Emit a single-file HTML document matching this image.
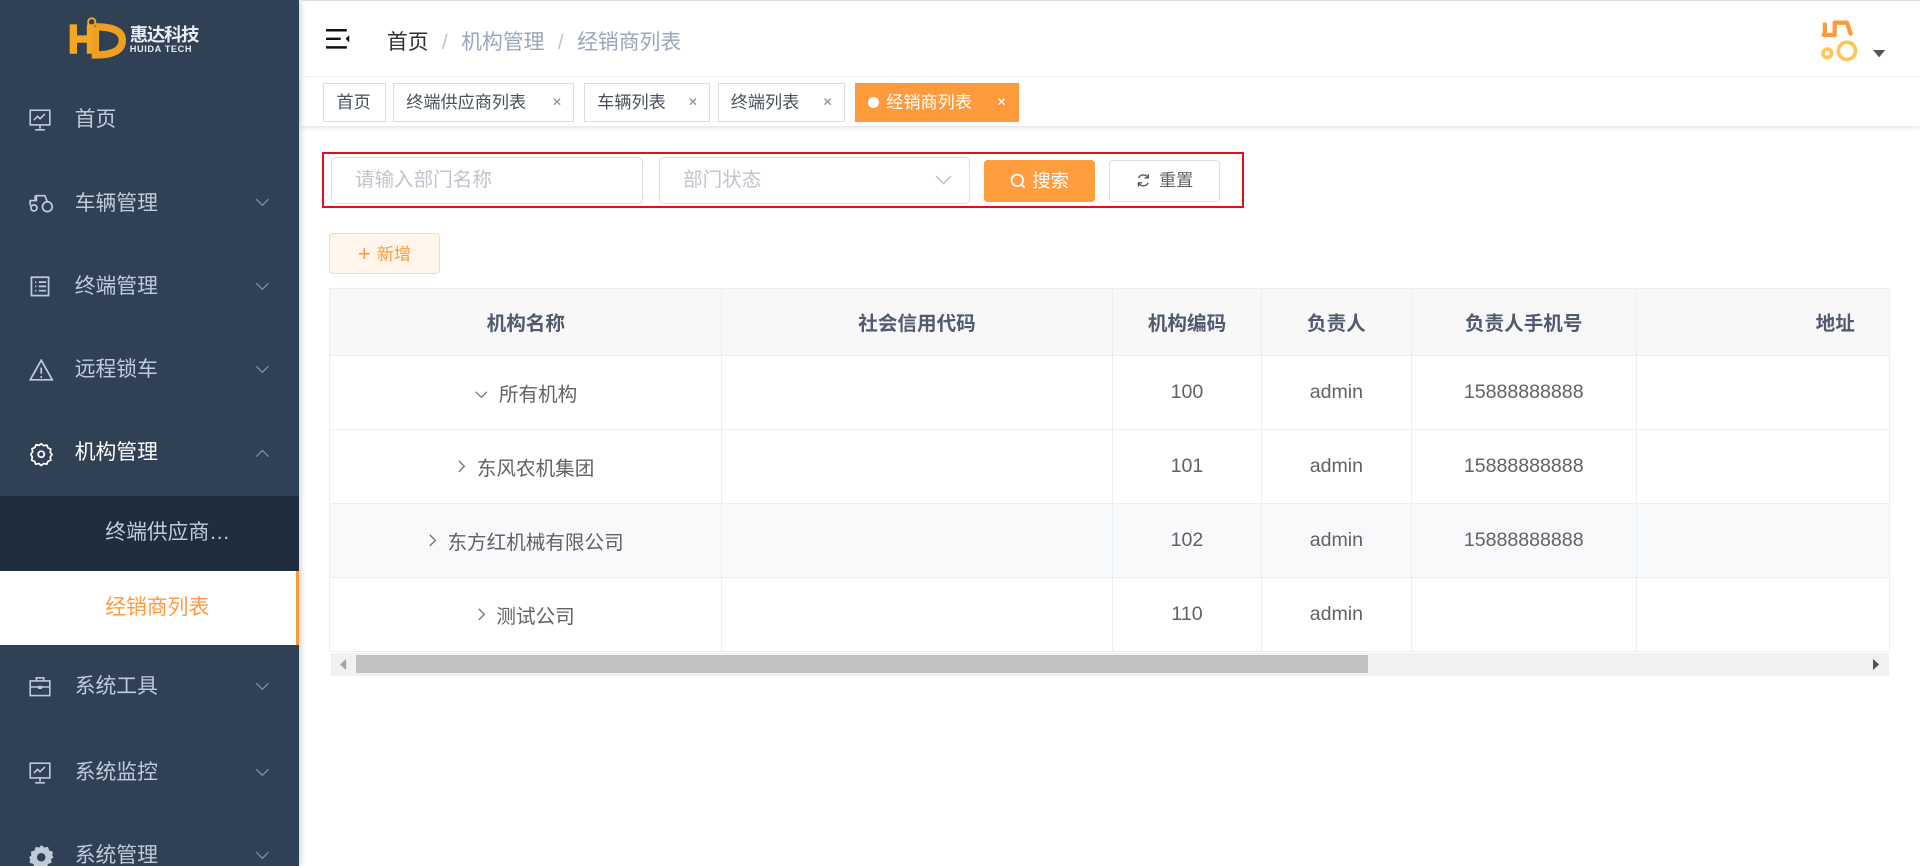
<!DOCTYPE html>
<html><head><meta charset="utf-8">
<style>
html{zoom:1.22449;overflow:hidden;height:707px}
*{box-sizing:border-box;margin:0;padding:0}
body{width:1568px;height:707px;overflow:hidden;position:relative;background:#fff;font-family:"Liberation Sans","Noto Sans CJK SC",sans-serif;}
.abs{position:absolute}
#side{left:0;top:0;width:244px;height:707px;background:#304156;box-shadow:2px 0 4px rgba(0,0,0,.15);overflow:hidden}
.mi{position:absolute;left:0;width:244px;height:68px;color:#bfcbd9;font-size:17px;line-height:68px;padding-left:61px}
.mi svg.ic{position:absolute;left:24px;top:25px}
.mi .ar{position:absolute;left:208px;top:30px}
.sub{position:absolute;left:0;width:244px;height:61px;line-height:61px;font-size:17px;padding-left:86px}
#hdr{left:246px;top:0;width:1322px;height:62px;border-top:1px solid #ddd}
#tags{left:246px;top:62px;width:1322px;height:41px;border-top:1px solid #eef0f3;box-shadow:0 2px 3px rgba(0,0,0,.1)}
.tag{position:absolute;top:5px;height:32px;border:1px solid #d8dce5;font-size:14px;line-height:30px;color:#495060;padding:0 10px;background:#fff;white-space:nowrap}
.tag i{font-style:normal;font-size:10px;color:#888;position:absolute;right:9px;top:0}
.inp{position:absolute;border:1px solid #dcdfe6;border-radius:4px;color:#c0c4cc;font-size:16px;line-height:37px;padding-left:19px;height:39px;top:128px}
table{border-collapse:collapse;position:absolute;left:269px;top:235px;width:1274px;table-layout:fixed}
td,th{border:1px solid #ebeef5;text-align:center;font-size:16px;color:#606266;font-weight:normal}
th{height:55px;background:#f8f8f9;color:#515a6e;font-weight:bold}
td{height:60.5px}
.ex{margin-right:8px;vertical-align:1px}
</style></head><body>
<div id="side" class="abs">
  <div class="abs" style="left:54px;top:14px;">
    <svg width="50" height="34" viewBox="0 0 50 34"><path d="M6 6 L6 30 M6 18 L20 18 M20 6 L20 30" stroke="#f5a623" stroke-width="6" fill="none"/><path d="M24 8 Q46 8 46 19 Q46 31 24 31 L24 8" stroke="#f0a020" stroke-width="6" fill="none"/><circle cx="21" cy="4" r="3" fill="none" stroke="#f5a623" stroke-width="1.5"/></svg>
  </div>
  <div class="abs" style="left:106px;top:17px;color:#e8edf3;font-size:15px;font-weight:bold;letter-spacing:-1px">惠达科技</div>
  <div class="abs" style="left:106px;top:36px;color:#e8edf3;font-size:7.5px;font-weight:bold;letter-spacing:.5px">HUIDA TECH</div>

  <div class="mi" style="top:64px"><svg class="ic" width="18" height="18" viewBox="0 0 18 18" fill="none" stroke="#bfcbd9" stroke-width="1.3"><rect x="1" y="1" width="16" height="12"/><path d="M9 13v3M5 17h8M4 9l3-3 2 2 4-4"/></svg>首页</div>
  <div class="mi" style="top:132px"><svg class="ic" width="20" height="18" viewBox="0 0 20 18" fill="none" stroke="#bfcbd9" stroke-width="1.4"><circle cx="4" cy="13" r="2.5"/><circle cx="15" cy="12" r="4"/><path d="M1 11V7h5V3h7l2 5M5 7V3"/></svg>车辆管理<svg class="ar" width="12" height="8" viewBox="0 0 12 8"><path d="M1 1l5 5 5-5" stroke="#8391a5" fill="none"/></svg></div>
  <div class="mi" style="top:200px"><svg class="ic" width="18" height="18" viewBox="0 0 18 18" fill="none" stroke="#bfcbd9" stroke-width="1.4"><rect x="2" y="1" width="14" height="15"/><path d="M5 5h1M8 5h6M5 8.5h1M8 8.5h6M5 12h1M8 12h6"/></svg>终端管理<svg class="ar" width="12" height="8" viewBox="0 0 12 8"><path d="M1 1l5 5 5-5" stroke="#8391a5" fill="none"/></svg></div>
  <div class="mi" style="top:268px"><svg class="ic" width="20" height="18" viewBox="0 0 20 18" fill="none" stroke="#bfcbd9" stroke-width="1.4"><path d="M10 1L19 17H1Z M10 7v5M10 14v1.5"/></svg>远程锁车<svg class="ar" width="12" height="8" viewBox="0 0 12 8"><path d="M1 1l5 5 5-5" stroke="#8391a5" fill="none"/></svg></div>
  <div class="mi" style="top:336px;color:#fff"><svg class="ic" width="20" height="20" viewBox="0 0 20 20" fill="none" stroke="#fff" stroke-width="1.4"><path d="M10 1.5l2 1.5 2.5-.5 1 2.3 2.3 1-.5 2.5 1.5 2-1.5 2 .5 2.5-2.3 1-1 2.3-2.5-.5-2 1.5-2-1.5-2.5.5-1-2.3-2.3-1 .5-2.5L1.5 10l1.5-2-.5-2.5 2.3-1 1-2.3 2.5.5z"/><circle cx="10" cy="10" r="2.5"/></svg>机构管理<svg class="ar" width="12" height="8" viewBox="0 0 12 8"><path d="M1 7l5-5 5 5" stroke="#8391a5" fill="none"/></svg></div>
  <div class="sub" style="top:405px;background:#1f2d3d;color:#bfcbd9">终端供应商…</div>
  <div class="sub" style="top:466px;background:#fff;color:#ff9a3c;border-right:3px solid #ff9a3c">经销商列表</div>
  <div class="mi" style="top:527px"><svg class="ic" width="18" height="18" viewBox="0 0 18 18" fill="none" stroke="#bfcbd9" stroke-width="1.3"><rect x="1" y="4" width="16" height="12"/><path d="M6 4V1.5h6V4M1 9h16M8 8v2h2V8"/></svg>系统工具<svg class="ar" width="12" height="8" viewBox="0 0 12 8"><path d="M1 1l5 5 5-5" stroke="#8391a5" fill="none"/></svg></div>
  <div class="mi" style="top:597px"><svg class="ic" width="18" height="18" viewBox="0 0 18 18" fill="none" stroke="#bfcbd9" stroke-width="1.3"><rect x="1" y="1" width="16" height="12"/><path d="M9 13v3M5 17h8M4 9l3-3 2 2 4-4"/></svg>系统监控<svg class="ar" width="12" height="8" viewBox="0 0 12 8"><path d="M1 1l5 5 5-5" stroke="#8391a5" fill="none"/></svg></div>
  <div class="mi" style="top:665px"><svg class="ic" width="20" height="20" viewBox="0 0 20 20"><path fill="#bfcbd9" d="M10 0l2.5 2 3-.5 1 3 3 1-.5 3L20 10l-2 1.5.5 3-3 1-1 3-3-.5L10 20l-2.5-2-3 .5-1-3-3-1 .5-3L0 10l2-1.5-.5-3 3-1 1-3 3 .5z"/><circle cx="10" cy="10" r="3.5" fill="#304156"/></svg>系统管理<svg class="ar" width="12" height="8" viewBox="0 0 12 8"><path d="M1 1l5 5 5-5" stroke="#8391a5" fill="none"/></svg></div>
</div>

<div id="hdr" class="abs">
  <svg class="abs" style="left:20px;top:23px" width="20" height="16" viewBox="0 0 20 16"><path d="M0 1h17M0 8h12M0 15h17" stroke="#111" stroke-width="2"/><path d="M19 5l-3 3 3 3z" fill="#111"/></svg>
  <div class="abs" style="left:70px;top:20px;font-size:17px;color:#303133">首页<span style="color:#c0c4cc;margin:0 11px">/</span><span style="color:#97a8be">机构管理</span><span style="color:#c0c4cc;margin:0 11px">/</span><span style="color:#97a8be">经销商列表</span></div>
  <svg class="abs" style="left:1240px;top:15px" width="36" height="36" viewBox="0 0 36 36"><path d="M3 13h9V3h10l3 9" stroke="#ff9a3c" stroke-width="3.5" fill="none" stroke-linejoin="round" stroke-linecap="round"/><path d="M4 3v10" stroke="#ff9a3c" stroke-width="3.5"/><circle cx="6" cy="28" r="3.5" stroke="#ffc55a" stroke-width="3" fill="none"/><circle cx="22" cy="26" r="7" stroke="#ffc55a" stroke-width="3" fill="none"/></svg>
  <svg class="abs" style="left:1284px;top:40px" width="10" height="6"><path d="M0 0h10L5 6z" fill="#555"/></svg>
</div>

<div id="tags" class="abs">
  <div class="tag" style="left:18px;width:51px">首页</div>
  <div class="tag" style="left:75px;width:148px">终端供应商列表<i>✕</i></div>
  <div class="tag" style="left:231px;width:103px">车辆列表<i>✕</i></div>
  <div class="tag" style="left:340px;width:104px">终端列表<i>✕</i></div>
  <div class="tag" style="left:452px;width:134px;background:#ff9a3c;border-color:#ff9a3c;color:#fff;padding-left:10px"><span style="display:inline-block;width:9px;height:9px;border-radius:50%;background:#fff;margin-right:6px"></span>经销商列表<i style="color:#fff">✕</i></div>
</div>

<div class="abs" style="left:263px;top:124px;width:753px;height:46px;border:2px solid #e0101a"></div>
<div class="inp" style="left:270px;width:255px">请输入部门名称</div>
<div class="inp" style="left:538px;width:254px">部门状态<svg class="abs" style="left:225px;top:14px" width="14" height="9"><path d="M1 1l6 6 6-6" stroke="#c0c4cc" fill="none" stroke-width="1.3"/></svg></div>
<div class="abs" style="left:804px;top:131px;width:90px;height:34px;background:#ff9d3f;border-radius:3px;color:#fff;font-size:15px;line-height:34px;text-align:center"><svg width="13" height="13" viewBox="0 0 13 13" style="vertical-align:-1px;margin-right:5px"><circle cx="6" cy="6" r="4.7" stroke="#fff" stroke-width="1.4" fill="none"/><path d="M9.5 9.5L12 12" stroke="#fff" stroke-width="1.4"/></svg>搜索</div>
<div class="abs" style="left:906px;top:131px;width:90px;height:34px;border:1px solid #dcdfe6;border-radius:3px;color:#606266;font-size:14px;line-height:32px;text-align:center"><svg width="12" height="12" viewBox="0 0 12 12" style="vertical-align:-1px;margin-right:7px"><path d="M10 4A4.5 4.5 0 0 0 2 4M2 8a4.5 4.5 0 0 0 8 0M10 1v3H7M2 11V8h3" stroke="#555" fill="none" stroke-width="1.1"/></svg>重置</div>
<div class="abs" style="left:269px;top:190px;width:90px;height:34px;border:1px solid #ffd8b1;background:#fff5eb;border-radius:3px;color:#ff9a3c;font-size:14px;line-height:32px;text-align:center"><span style="font-size:18px;vertical-align:-1px;margin-right:5px">+</span>新增</div>

<table>
<colgroup><col style="width:320px"><col style="width:319px"><col style="width:122px"><col style="width:122px"><col style="width:184px"><col style="width:207px"></colgroup>
<tr><th>机构名称</th><th>社会信用代码</th><th>机构编码</th><th>负责人</th><th>负责人手机号</th><th style="text-align:left;padding-left:146px">地址</th></tr>
<tr><td><svg class="ex" width="12" height="8" viewBox="0 0 12 8"><path d="M1.5 1.5l4.5 4.5 4.5-4.5" stroke="#777" fill="none" stroke-width="1.1"/></svg>所有机构</td><td></td><td>100</td><td>admin</td><td>15888888888</td><td></td></tr>
<tr><td><svg class="ex" width="8" height="12" viewBox="0 0 8 12"><path d="M1.5 1.5l4.5 4.5-4.5 4.5" stroke="#777" fill="none" stroke-width="1.1"/></svg>东风农机集团</td><td></td><td>101</td><td>admin</td><td>15888888888</td><td></td></tr>
<tr style="background:#f8f9fb"><td><svg class="ex" width="8" height="12" viewBox="0 0 8 12"><path d="M1.5 1.5l4.5 4.5-4.5 4.5" stroke="#777" fill="none" stroke-width="1.1"/></svg>东方红机械有限公司</td><td></td><td>102</td><td>admin</td><td>15888888888</td><td></td></tr>
<tr><td><svg class="ex" width="8" height="12" viewBox="0 0 8 12"><path d="M1.5 1.5l4.5 4.5-4.5 4.5" stroke="#777" fill="none" stroke-width="1.1"/></svg>测试公司</td><td></td><td>110</td><td>admin</td><td></td><td></td></tr>
</table>
<div class="abs" style="left:270px;top:533px;width:1273px;height:19px;background:#f1f1f1"></div>
<div class="abs" style="left:291px;top:535px;width:826px;height:15px;background:#c1c1c1"></div>
<svg class="abs" style="left:278px;top:538px" width="6" height="9"><path d="M5 0v9L0 4.5z" fill="#a3a3a3"/></svg>
<svg class="abs" style="left:1530px;top:538px" width="6" height="9"><path d="M0 0v9l5-4.5z" fill="#505050"/></svg>
</body></html>
